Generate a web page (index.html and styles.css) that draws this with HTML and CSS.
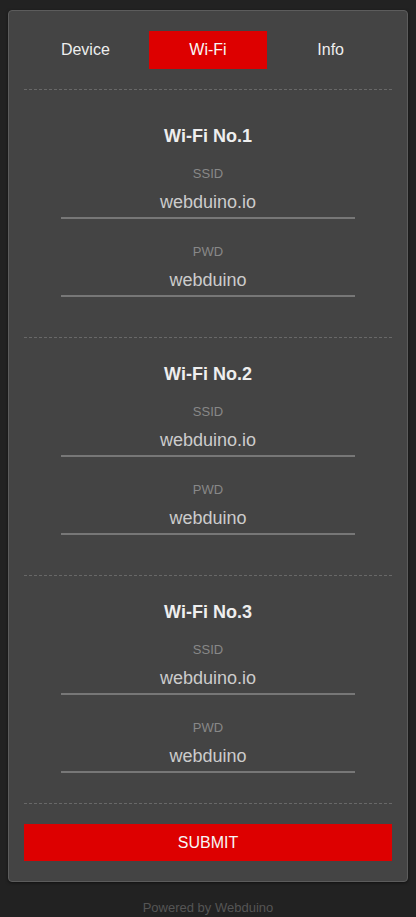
FILE: index.html
```html
<!DOCTYPE html>
<html>
<head>
<meta charset="utf-8">
<link rel="stylesheet" href="styles.css">
</head>
<body>
<div class="card">
  <nav class="tabs">
    <div class="tab">Device</div>
    <div class="tab active">Wi-Fi</div>
    <div class="tab">Info</div>
  </nav>
  <hr class="sep">
  <section class="wifi first">
    <h2 class="title">Wi-Fi No.1</h2>
    <div class="field">
      <div class="label">SSID</div>
      <div class="value">webduino.io</div>
    </div>
    <div class="field">
      <div class="label">PWD</div>
      <div class="value">webduino</div>
    </div>
  </section>
  <hr class="sep">
  <section class="wifi">
    <h2 class="title">Wi-Fi No.2</h2>
    <div class="field">
      <div class="label">SSID</div>
      <div class="value">webduino.io</div>
    </div>
    <div class="field">
      <div class="label">PWD</div>
      <div class="value">webduino</div>
    </div>
  </section>
  <hr class="sep">
  <section class="wifi last">
    <h2 class="title">Wi-Fi No.3</h2>
    <div class="field">
      <div class="label">SSID</div>
      <div class="value">webduino.io</div>
    </div>
    <div class="field">
      <div class="label">PWD</div>
      <div class="value">webduino</div>
    </div>
  </section>
  <hr class="sep">
  <button class="submit">SUBMIT</button>
</div>
<footer class="footer">Powered by Webduino</footer>
</body>
</html>
```
FILE: styles.css
```css
* { box-sizing: border-box; }
html, body { margin: 0; padding: 0; }
body {
  background: #222222;
  font-family: "Liberation Sans", Arial, sans-serif;
  width: 416px;
}
.card {
  margin: 10px 8px 0;
  background: #444444;
  border: 1px solid #5c5c5c;
  border-radius: 4px;
  padding: 20px 15px 20px;
  box-shadow: 0 1px 3px rgba(0,0,0,0.5);
}
.tabs {
  display: flex;
  height: 38px;
}
.tab {
  flex: 1 1 0;
  text-align: center;
  line-height: 38px;
  font-size: 16px;
  color: #eeeeee;
  margin: 0 2px;
}
.tab.active {
  background: #dd0000;
  color: #f7f7f7;
}
.sep {
  margin: 20px 0 0;
  border: 0;
  border-top: 1px dashed #686868;
  height: 0;
}
.wifi {
  padding: 25px 0 40px;
  display: flex;
  flex-direction: column;
  align-items: center;
}
.wifi.first { padding-top: 35px; }
.wifi.last { padding-bottom: 30px; }
.wifi + .sep { margin-top: 0; }
.title {
  margin: 0;
  font-size: 18px;
  line-height: 22px;
  font-weight: bold;
  color: #eeeeee;
}
.field {
  width: 80%;
  text-align: center;
  margin-top: 19px;
}
.field + .field { margin-top: 25px; }
.label {
  font-size: 13px;
  line-height: 16px;
  color: #888888;
}
.value {
  margin-top: 8px;
  font-size: 18px;
  line-height: 24px;
  color: #cccccc;
  padding-bottom: 3px;
  border-bottom: 2px solid #777777;
}
.submit {
  display: block;
  width: 100%;
  margin-top: 20px;
  height: 37px;
  border: 0;
  background: #dd0000;
  color: #f7f7f7;
  font-family: "Liberation Sans", Arial, sans-serif;
  font-size: 16px;
  padding: 0;
}
.footer {
  margin-top: 18px;
  text-align: center;
  font-size: 13px;
  line-height: 16px;
  color: #555555;
}
```
